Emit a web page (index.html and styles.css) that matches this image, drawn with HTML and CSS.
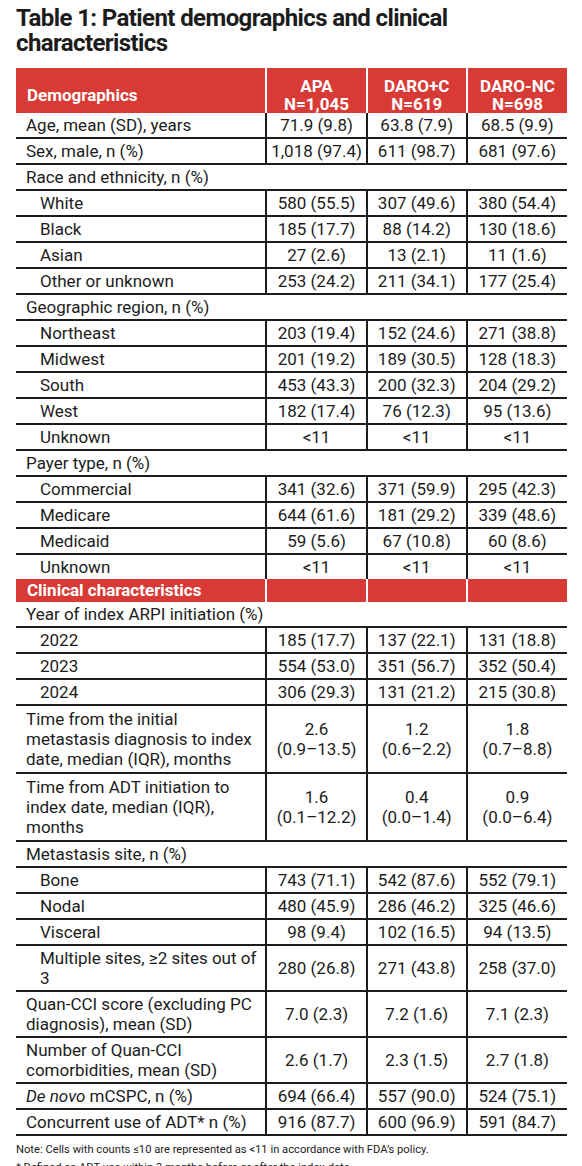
FILE: index.html
```html
<!DOCTYPE html>
<html lang="en">
<head>
  <meta charset="UTF-8">
  <title>Table 1: Patient demographics and clinical characteristics</title>
  <link rel="stylesheet" href="styles.css">
</head>
<body>
  <div class="page">
    <h1 class="table-title">Table 1: Patient demographics and clinical characteristics</h1>

    <table class="data-table">
      <colgroup>
        <col class="col-label">
        <col class="col-num">
        <col class="col-num">
        <col class="col-num">
      </colgroup>
      <thead>
        <tr class="head-row">
          <th class="label">Demographics</th>
          <th>APA<br>N=1,045</th>
          <th>DARO+C<br>N=619</th>
          <th>DARO-NC<br>N=698</th>
        </tr>
      </thead>
      <tbody>
        <tr><td class="label">Age, mean (SD), years</td><td>71.9 (9.8)</td><td>63.8 (7.9)</td><td>68.5 (9.9)</td></tr>
        <tr><td class="label">Sex, male, n (%)</td><td>1,018 (97.4)</td><td>611 (98.7)</td><td>681 (97.6)</td></tr>

        <tr class="group"><td colspan="4">Race and ethnicity, n (%)</td></tr>
        <tr class="sub"><td class="label">White</td><td>580 (55.5)</td><td>307 (49.6)</td><td>380 (54.4)</td></tr>
        <tr class="sub"><td class="label">Black</td><td>185 (17.7)</td><td>88 (14.2)</td><td>130 (18.6)</td></tr>
        <tr class="sub"><td class="label">Asian</td><td>27 (2.6)</td><td>13 (2.1)</td><td>11 (1.6)</td></tr>
        <tr class="sub"><td class="label">Other or unknown</td><td>253 (24.2)</td><td>211 (34.1)</td><td>177 (25.4)</td></tr>

        <tr class="group"><td colspan="4">Geographic region, n (%)</td></tr>
        <tr class="sub"><td class="label">Northeast</td><td>203 (19.4)</td><td>152 (24.6)</td><td>271 (38.8)</td></tr>
        <tr class="sub"><td class="label">Midwest</td><td>201 (19.2)</td><td>189 (30.5)</td><td>128 (18.3)</td></tr>
        <tr class="sub"><td class="label">South</td><td>453 (43.3)</td><td>200 (32.3)</td><td>204 (29.2)</td></tr>
        <tr class="sub"><td class="label">West</td><td>182 (17.4)</td><td>76 (12.3)</td><td>95 (13.6)</td></tr>
        <tr class="sub"><td class="label">Unknown</td><td>&lt;11</td><td>&lt;11</td><td>&lt;11</td></tr>

        <tr class="group"><td colspan="4">Payer type, n (%)</td></tr>
        <tr class="sub"><td class="label">Commercial</td><td>341 (32.6)</td><td>371 (59.9)</td><td>295 (42.3)</td></tr>
        <tr class="sub"><td class="label">Medicare</td><td>644 (61.6)</td><td>181 (29.2)</td><td>339 (48.6)</td></tr>
        <tr class="sub"><td class="label">Medicaid</td><td>59 (5.6)</td><td>67 (10.8)</td><td>60 (8.6)</td></tr>
        <tr class="sub no-line"><td class="label">Unknown</td><td>&lt;11</td><td>&lt;11</td><td>&lt;11</td></tr>

        <tr class="section-row"><td class="label">Clinical characteristics</td><td></td><td></td><td></td></tr>

        <tr class="group"><td colspan="4">Year of index ARPI initiation (%)</td></tr>
        <tr class="sub"><td class="label">2022</td><td>185 (17.7)</td><td>137 (22.1)</td><td>131 (18.8)</td></tr>
        <tr class="sub"><td class="label">2023</td><td>554 (53.0)</td><td>351 (56.7)</td><td>352 (50.4)</td></tr>
        <tr class="sub"><td class="label">2024</td><td>306 (29.3)</td><td>131 (21.2)</td><td>215 (30.8)</td></tr>

        <tr class="tall"><td class="label">Time from the initial<br>metastasis diagnosis to index<br>date, median (IQR), months</td><td>2.6<br>(0.9–13.5)</td><td>1.2<br>(0.6–2.2)</td><td>1.8<br>(0.7–8.8)</td></tr>
        <tr class="tall"><td class="label">Time from ADT initiation to<br>index date, median (IQR),<br>months</td><td>1.6<br>(0.1–12.2)</td><td>0.4<br>(0.0–1.4)</td><td>0.9<br>(0.0–6.4)</td></tr>

        <tr class="group"><td colspan="4">Metastasis site, n (%)</td></tr>
        <tr class="sub"><td class="label">Bone</td><td>743 (71.1)</td><td>542 (87.6)</td><td>552 (79.1)</td></tr>
        <tr class="sub"><td class="label">Nodal</td><td>480 (45.9)</td><td>286 (46.2)</td><td>325 (46.6)</td></tr>
        <tr class="sub"><td class="label">Visceral</td><td>98 (9.4)</td><td>102 (16.5)</td><td>94 (13.5)</td></tr>
        <tr class="sub"><td class="label">Multiple sites, ≥2 sites out of<br>3</td><td>280 (26.8)</td><td>271 (43.8)</td><td>258 (37.0)</td></tr>

        <tr><td class="label">Quan-CCI score (excluding PC<br>diagnosis), mean (SD)</td><td>7.0 (2.3)</td><td>7.2 (1.6)</td><td>7.1 (2.3)</td></tr>
        <tr><td class="label">Number of Quan-CCI<br>comorbidities, mean (SD)</td><td>2.6 (1.7)</td><td>2.3 (1.5)</td><td>2.7 (1.8)</td></tr>
        <tr><td class="label"><em>De novo</em> mCSPC, n (%)</td><td>694 (66.4)</td><td>557 (90.0)</td><td>524 (75.1)</td></tr>
        <tr><td class="label">Concurrent use of ADT* n (%)</td><td>916 (87.7)</td><td>600 (96.9)</td><td>591 (84.7)</td></tr>
      </tbody>
    </table>

    <p class="table-note first">Note: Cells with counts ≤10 are represented as &lt;11 in accordance with FDA’s policy.</p>
    <p class="table-note">* Defined as ADT use within 3 months before or after the index date.</p>
  </div>
</body>
</html>
```

FILE: styles.css
```css
/* ----------------------------------
   Page
----------------------------------- */
* {
  box-sizing: border-box;
  margin: 0;
  padding: 0;
}
body {
  background: #fff;
  color: #1c1c1c;
  font-family: Roboto, 'Liberation Sans', Arial, sans-serif;
}
.page {
  padding: 0 15px 0 16px;
}
.table-title {
  max-width: 450px;
  margin: 6px 0 12px 0;
  font-size: 24px;
  line-height: 25px;
  font-weight: 700;
  letter-spacing: -0.6px;
  color: #1c1c1c;
}

/* ----------------------------------
   Table
----------------------------------- */
.data-table {
  width: 551px;
  border-collapse: collapse;
  table-layout: fixed;
  font-size: 17px;
  line-height: 20px;
}
.col-label { width: 250px; }
.col-num { width: 100px; }

.data-table td {
  padding: 2px 2px;
  text-align: center;
  vertical-align: middle;
  white-space: nowrap;
  border-bottom: 2px solid #1c1c1c;
  border-left: 2px solid #1c1c1c;
}
.data-table td.label,
.data-table .group td {
  text-align: left;
  padding: 2px 2px 2px 10px;
  border-left: none;
}
.data-table .sub td.label {
  padding-left: 24px;
}
.data-table .tall td {
  padding-top: 3px;
  padding-bottom: 3px;
}
.data-table .no-line td {
  border-bottom: none;
}

/* red header and section rows */
.head-row th {
  background: #d83a35;
  color: #fff;
  font-weight: 700;
  font-size: 17px;
  line-height: 18px;
  padding: 9px 2px 0 2px;
  height: 45px;
  text-align: center;
  vertical-align: middle;
  border-left: 2px solid #fff;
}
.head-row th.label {
  text-align: left;
  padding-left: 11px;
  border-left: none;
}
.section-row td {
  background: #d83a35;
  color: #fff;
  font-weight: 700;
  font-size: 17px;
  line-height: 19px;
  padding-top: 2px;
  padding-bottom: 2px;
  border-bottom: none;
  border-left: 2px solid #fff;
}
.section-row td.label {
  padding-left: 11px;
  border-left: none;
}

/* ----------------------------------
   Notes
----------------------------------- */
.table-note {
  font-size: 11.2px;
  line-height: 18px;
  color: #1c1c1c;
}
.table-note.first {
  margin-top: 5px;
}
```
